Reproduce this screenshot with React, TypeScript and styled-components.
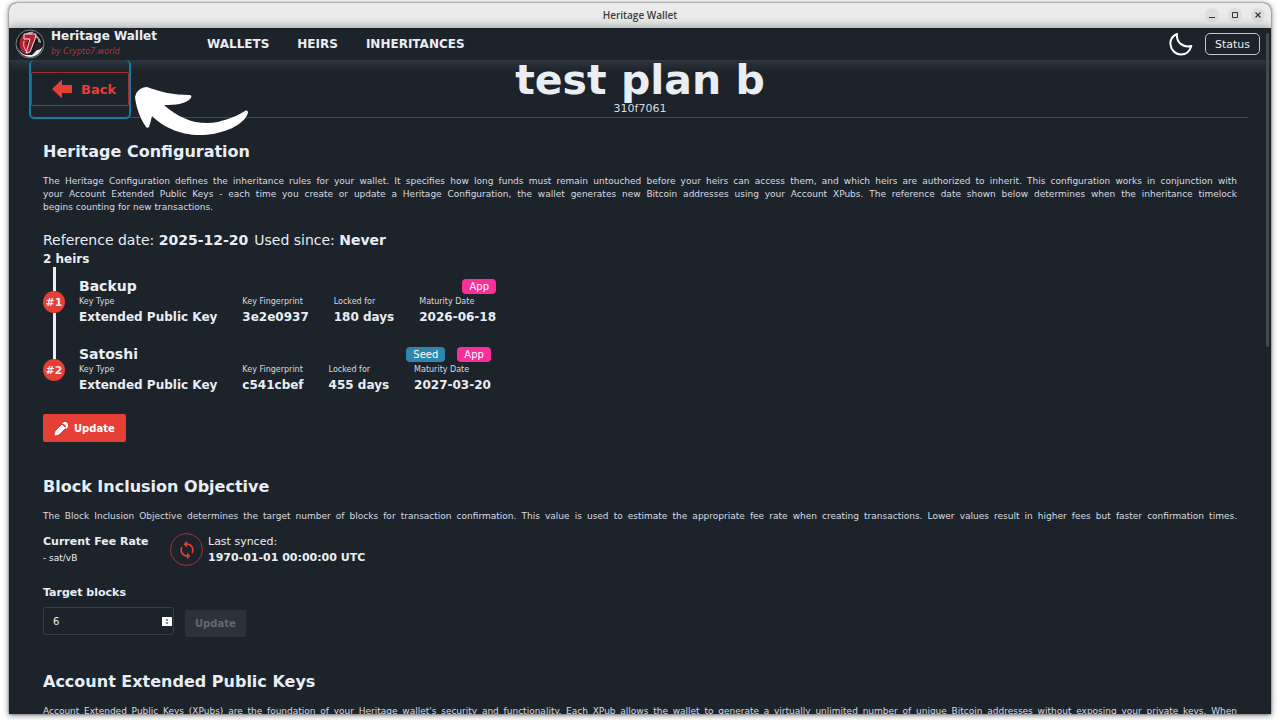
import React from "react";
import styled, { createGlobalStyle } from "styled-components";
import { MdSync } from "react-icons/md";

const red = "#e63f35";
const bg = "#1d232a";
const text = "#e9eef5";
const softText = "#d6dbe2";

const GlobalStyle = createGlobalStyle`
  * { box-sizing: border-box; }
  html, body, #root { height: 100%; }
  body {
    margin: 0;
    background: #ffffff;
    color: ${text};
    font-family: "DejaVu Sans", sans-serif;
    font-size: 12px;
    overflow: hidden;
  }
  h1, h2, h3, p, dl, dd, dt, ol { margin: 0; padding: 0; }
  button { font-family: inherit; cursor: pointer; }
  svg { flex-shrink: 0; }
`;

const Desktop = styled.div`
  height: 100vh;
  padding: 3px 9px 6px;
`;

const Window = styled.div`
  position: relative;
  display: flex;
  flex-direction: column;
  height: 100%;
  overflow: hidden;
  background: ${bg};
  border-radius: 8px 8px 0 0;
  box-shadow: 0 0 2px #555555, 0 1px 6px rgba(0, 0, 0, 0.55);
`;

const TitleBar = styled.div`
  display: grid;
  grid-template-columns: 1fr auto 1fr;
  align-items: center;
  flex: 0 0 25px;
  padding: 0 6px 2px;
  background: #ebebeb;
  color: #3d3d3d;
  font-family: "Open Sans", sans-serif;
  font-size: 10px;
  font-weight: 600;
`;

const WindowTitle = styled.span`
  grid-column: 2;
`;

const WindowControls = styled.div`
  display: flex;
  justify-content: flex-end;
  gap: 9px;
`;

const WindowButton = styled.button`
  display: grid;
  place-items: center;
  width: 14px;
  height: 14px;
  padding: 0;
  border: 0;
  border-radius: 50%;
  background: #dedede;
  color: #333333;
`;

const NavBar = styled.header`
  display: flex;
  align-items: center;
  flex: 0 0 32px;
  padding: 0 11px 0 6px;
  background: ${bg};
  box-shadow: 0 2px 10px 2px rgba(70, 78, 90, 0.6);
`;

const Brand = styled.a`
  display: flex;
  align-items: center;
  gap: 6px;
  width: 192px;
  color: ${text};
  text-decoration: none;
`;

const BrandName = styled.span`
  display: block;
  font-weight: 700;
  line-height: 15px;
`;

const BrandBy = styled.span`
  display: block;
  color: #b5343a;
  font-size: 8px;
  font-style: italic;
  line-height: 15px;
`;

const NavLinks = styled.nav`
  display: flex;
  flex: 1;
  gap: 28px;
`;

const NavLink = styled.a`
  color: ${text};
  font-weight: 700;
  text-decoration: none;
`;

const ThemeButton = styled.button`
  display: flex;
  margin-right: 12px;
  padding: 0;
  border: 0;
  background: none;
  color: #ffffff;
`;

const StatusButton = styled.button`
  height: 22px;
  padding: 0 9px;
  border: 1px solid #c3c8ce;
  border-radius: 5px;
  background: transparent;
  color: ${text};
  font-size: 11px;
`;

const Main = styled.main`
  flex: 1;
  min-height: 0;
  overflow: hidden;
`;

const PlanHeader = styled.div`
  display: grid;
  grid-template-columns: 1fr auto 1fr;
  align-items: start;
  height: 58px;
  margin: 0 23px;
  border-bottom: 1px solid #454b53;
`;

const BackFrame = styled.div`
  position: relative;
  justify-self: start;
  width: 102px;
  height: 59px;
  margin-left: -3px;
  padding-top: 12px;
  border: 2px solid #177aa3;
  border-top: 0;
  border-radius: 5px;
`;

const BackButton = styled.button`
  display: flex;
  align-items: center;
  gap: 8px;
  width: 100%;
  height: 34px;
  padding: 0 0 0 19px;
  border: 1px solid #a52c2b;
  border-radius: 2px;
  background: transparent;
  color: ${red};
  font-size: 13px;
  font-weight: 700;
`;

const Pointer = styled.svg`
  position: absolute;
  top: 26px;
  left: 103px;
`;

const PlanTitle = styled.div`
  text-align: center;
`;

const PlanName = styled.h1`
  font-size: 41px;
  font-weight: 700;
  line-height: 41px;
`;

const PlanId = styled.div`
  color: ${softText};
  font-size: 11px;
  line-height: 16px;
`;

const Content = styled.div`
  padding: 23px 34px 0;
`;

const Section = styled.section`
  margin-bottom: 34px;
`;

const SectionTitle = styled.h2`
  margin-bottom: 12px;
  font-size: 16px;
  font-weight: 700;
  line-height: 22px;
`;

const Paragraph = styled.p`
  color: ${softText};
  font-size: 9px;
  line-height: 13px;
`;

const Line = styled.span<{ $full?: boolean }>`
  display: block;
  white-space: nowrap;
  text-align: justify;
  text-align-last: ${(p) => (p.$full ? "justify" : "left")};
`;

const Dates = styled.div`
  display: flex;
  gap: 6px;
  margin-top: 15px;
  font-size: 14px;
  line-height: 22px;
`;

const HeirCount = styled.div`
  font-weight: 700;
  line-height: 16px;
`;

const HeirList = styled.ol`
  list-style: none;
`;

const Heir = styled.li`
  display: flex;
  gap: 14px;
  height: 68px;
`;

const Rail = styled.div<{ $last: boolean }>`
  display: flex;
  flex-direction: column;
  align-items: center;
  width: 22px;
  &::before {
    content: "";
    width: 3px;
    height: 24px;
    background: ${text};
  }
  &::after {
    content: "";
    width: 3px;
    flex: 1;
    background: ${(p) => (p.$last ? "transparent" : text)};
  }
`;

const Rank = styled.span`
  display: grid;
  place-items: center;
  width: 22px;
  height: 22px;
  border-radius: 50%;
  background: ${red};
  font-size: 11px;
  font-weight: 700;
`;

const HeirBody = styled.div`
  padding-top: 9px;
`;

const HeirTop = styled.div`
  display: flex;
  align-items: center;
  justify-content: space-between;
`;

const HeirName = styled.h3`
  font-size: 14px;
  font-weight: 700;
  line-height: 20px;
`;

const Badges = styled.div`
  display: flex;
  gap: 12px;
`;

const Badge = styled.span<{ $color: string }>`
  height: 15px;
  padding: 0 7px;
  border-radius: 4px;
  background: ${(p) => p.$color};
  color: #ffffff;
  font-size: 10px;
  line-height: 15px;
`;

const Facts = styled.dl`
  display: flex;
  gap: 25px;
`;

const FactLabel = styled.dt`
  color: ${softText};
  font-size: 8px;
  line-height: 12px;
`;

const FactValue = styled.dd`
  font-weight: 700;
  line-height: 19px;
`;

const UpdateButton = styled.button`
  display: flex;
  align-items: center;
  justify-content: center;
  gap: 5px;
  height: 28px;
  padding: 0 11px;
  border: 0;
  border-radius: 2px;
  background: ${red};
  color: #ffffff;
  font-size: 10px;
  font-weight: 700;
  &:disabled {
    height: 27px;
    padding: 0 10px;
    background: #2c323a;
    color: #636870;
  }
`;

const HeirActions = styled.div`
  margin-top: 11px;
`;

const FeeRow = styled.div`
  display: flex;
  align-items: center;
  margin-top: 10px;
  font-size: 11px;
  line-height: 16px;
`;

const FeeRate = styled.div`
  width: 127px;
`;

const Small = styled.div`
  font-size: 9px;
`;

const SyncButton = styled.button`
  display: grid;
  place-items: center;
  width: 33px;
  height: 33px;
  margin-right: 5px;
  padding: 0;
  border: 1px solid #a8303a;
  border-radius: 50%;
  background: transparent;
  color: ${red};
`;

const TargetLabel = styled.label`
  display: block;
  margin-top: 19px;
  font-size: 11px;
  font-weight: 700;
  line-height: 16px;
`;

const TargetRow = styled.div`
  display: flex;
  align-items: flex-end;
  gap: 11px;
  margin-top: 6px;
`;

const Field = styled.div`
  display: flex;
  align-items: center;
  width: 131px;
  height: 28px;
  margin-bottom: 2px;
  padding: 0 1px 0 9px;
  border: 1px solid #383e46;
  border-radius: 3px;
`;

const NumberInput = styled.input`
  flex: 1;
  min-width: 0;
  padding: 0;
  border: 0;
  outline: 0;
  background: transparent;
  color: ${text};
  font-family: inherit;
  font-size: 10px;
  appearance: textfield;
  &::-webkit-inner-spin-button { appearance: none; }
`;

const ScrollThumb = styled.div`
  position: absolute;
  top: 30px;
  right: 2px;
  width: 3px;
  height: 314px;
  border-radius: 2px;
  background: #444950;
`;

type HeirData = {
  name: string;
  badges: string[];
  fingerprint: string;
  locked: string;
  maturity: string;
};

const heirs: HeirData[] = [
  { name: "Backup", badges: ["App"], fingerprint: "3e2e0937", locked: "180 days", maturity: "2026-06-18" },
  { name: "Satoshi", badges: ["Seed", "App"], fingerprint: "c541cbef", locked: "455 days", maturity: "2027-03-20" },
];

const badgeColors: Record<string, string> = { App: "#fb2f99", Seed: "#2f86ad" };

const Logo = () => (
  <svg width="30" height="30" viewBox="0 0 30 30" aria-hidden="true">
    <circle cx="15" cy="15" r="14" fill="#15181d" stroke="#7d7f83" strokeWidth="1" />
    <path d="M2 17c2 7 7 11 13 11s11-4 13-11c-2 3-4 4-6 4l-5 5h-6c-4-1-7-4-9-9z" fill="#eceaea" />
    <path d="M7 8c3-4 8-6 12-5l-3 2c-4 0-6 2-7 5zM21 6c3 2 5 5 5 8l-3-1c1-2-1-5-4-5z" fill="#a9a4a6" />
    <path d="M9 5c-5 4-6 12-2 18l5 3 3-3c-4-4-4-9-1-13l-3-1z" fill="#b51f32" />
    <path d="M9 5h12l-1 5-5 13-4 1 4-14H9z" fill="#b51f32" stroke="#eee4e5" strokeWidth="1" />
    <path d="M9 12c-1 4 0 7 2 10" fill="none" stroke="#e2b9be" strokeWidth="1" />
    <path d="M20 15l5-1 1 3-4 4-3-1z" fill="#2a2226" />
  </svg>
);

const Fact = ({ label, value }: { label: string; value: string }) => (
  <div>
    <FactLabel>{label}</FactLabel>
    <FactValue>{value}</FactValue>
  </div>
);

export default function App() {
  return (
    <Desktop>
      <GlobalStyle />
      <Window>
        <TitleBar>
          <WindowTitle>Heritage Wallet</WindowTitle>
          <WindowControls>
            <WindowButton aria-label="Minimize">
              <svg width="8" height="8" viewBox="0 0 8 8"><path d="M1 6.500h6" stroke="currentColor" /></svg>
            </WindowButton>
            <WindowButton aria-label="Maximize">
              <svg width="8" height="8" viewBox="0 0 8 8"><path d="M1.500 1.500h5v5h-5z" fill="none" stroke="currentColor" /></svg>
            </WindowButton>
            <WindowButton aria-label="Close">
              <svg width="8" height="8" viewBox="0 0 8 8"><path d="M1.500 1.500l5 5m0-5l-5 5" stroke="currentColor" strokeWidth="1.200" /></svg>
            </WindowButton>
          </WindowControls>
        </TitleBar>
        <NavBar>
          <Brand href="#">
            <Logo />
            <span>
              <BrandName>Heritage Wallet</BrandName>
              <BrandBy>by Crypto7.world</BrandBy>
            </span>
          </Brand>
          <NavLinks>
            <NavLink href="#wallets">WALLETS</NavLink>
            <NavLink href="#heirs">HEIRS</NavLink>
            <NavLink href="#inheritances">INHERITANCES</NavLink>
          </NavLinks>
          <ThemeButton aria-label="Dark theme">
            <svg width="24" height="24" viewBox="0 0 24 24">
              <path
                d="M8 2C3.500 4 1 8 1.500 12.500 2 18 6.500 22.500 12 22.500c5 0 9-3.500 10.300-8.500C15 16 7 11 8 2z"
                fill="none"
                stroke="currentColor"
                strokeWidth="2"
                strokeLinejoin="round"
              />
            </svg>
          </ThemeButton>
          <StatusButton>Status</StatusButton>
        </NavBar>
        <Main>
          <PlanHeader>
            <BackFrame>
              <BackButton>
                <svg width="22" height="20" viewBox="0 0 22 20" aria-hidden="true">
                  <path d="M1 10L11 0.500V6H21v8H11v5.500z" fill="currentColor" />
                </svg>
                Back
              </BackButton>
              <Pointer width="116" height="50" viewBox="0 0 116 50" aria-hidden="true">
                <path
                  d="M2 8C4 4 8 1 13 1c13 5 27 8 42 8 3 0 3 2 1 4-5 5-14 6-26 6 15 14 35 21 54 17 11-3 19-6 27-11 2-1 3 0 3 2-4 12-24 21-45 22-23 1-41-9-51-19-1 4-2 8-3 11-1 1-2 1-3 0C6 32 2 21 1 11z"
                  fill="#ffffff"
                />
              </Pointer>
            </BackFrame>
            <PlanTitle>
              <PlanName>test plan b</PlanName>
              <PlanId>310f7061</PlanId>
            </PlanTitle>
          </PlanHeader>
          <Content>
            <Section>
              <SectionTitle>Heritage Configuration</SectionTitle>
              <Paragraph>
                <Line $full>
                  The Heritage Configuration defines the inheritance rules for your wallet. It specifies how long funds must remain untouched before your heirs can access them, and which heirs are authorized to inherit. This configuration works in conjunction with
                </Line>
                <Line $full>
                  your Account Extended Public Keys - each time you create or update a Heritage Configuration, the wallet generates new Bitcoin addresses using your Account XPubs. The reference date shown below determines when the inheritance timelock
                </Line>
                <Line>begins counting for new transactions.</Line>
              </Paragraph>
              <Dates>
                <span>Reference date: <b>2025-12-20</b></span>
                <span>Used since: <b>Never</b></span>
              </Dates>
              <HeirCount>2 heirs</HeirCount>
              <HeirList>
                {heirs.map((heir, i) => (
                  <Heir key={heir.name}>
                    <Rail $last={i === heirs.length - 1}>
                      <Rank>#{i + 1}</Rank>
                    </Rail>
                    <HeirBody>
                      <HeirTop>
                        <HeirName>{heir.name}</HeirName>
                        <Badges>
                          {heir.badges.map((b) => (
                            <Badge key={b} $color={badgeColors[b]}>{b}</Badge>
                          ))}
                        </Badges>
                      </HeirTop>
                      <Facts>
                        <Fact label="Key Type" value="Extended Public Key" />
                        <Fact label="Key Fingerprint" value={heir.fingerprint} />
                        <Fact label="Locked for" value={heir.locked} />
                        <Fact label="Maturity Date" value={heir.maturity} />
                      </Facts>
                    </HeirBody>
                  </Heir>
                ))}
              </HeirList>
              <HeirActions>
                <UpdateButton>
                  <svg width="15" height="15" viewBox="0 0 15 15" aria-hidden="true">
                    <path d="M1 14l1-4 6-6 3 3-6 6z" fill="currentColor" stroke="currentColor" strokeLinejoin="round" />
                    <path d="M8 3l2-2h2l2 2v3l-2 2-1-1 1-2-2-2z" fill="currentColor" />
                  </svg>
                  Update
                </UpdateButton>
              </HeirActions>
            </Section>
            <Section>
              <SectionTitle>Block Inclusion Objective</SectionTitle>
              <Paragraph>
                <Line $full>
                  The Block Inclusion Objective determines the target number of blocks for transaction confirmation. This value is used to estimate the appropriate fee rate when creating transactions. Lower values result in higher fees but faster confirmation times.
                </Line>
              </Paragraph>
              <FeeRow>
                <FeeRate>
                  <b>Current Fee Rate</b>
                  <Small>- sat/vB</Small>
                </FeeRate>
                <SyncButton aria-label="Sync fee rate">
                  <MdSync size={20} />
                </SyncButton>
                <div>
                  <div>Last synced:</div>
                  <b>1970-01-01 00:00:00 UTC</b>
                </div>
              </FeeRow>
              <TargetLabel htmlFor="target-blocks">Target blocks</TargetLabel>
              <TargetRow>
                <Field>
                  <NumberInput id="target-blocks" type="number" defaultValue={6} />
                  <svg width="10" height="9" viewBox="0 0 10 9" aria-hidden="true">
                    <path d="M0 0h10v9H0z" fill="#ffffff" />
                    <path d="M3.500 3.500L5 2l1.500 1.500zM3.500 5.500L5 7l1.500-1.500z" fill="#222222" />
                  </svg>
                </Field>
                <UpdateButton disabled>Update</UpdateButton>
              </TargetRow>
            </Section>
            <Section>
              <SectionTitle>Account Extended Public Keys</SectionTitle>
              <Paragraph>
                <Line $full>
                  Account Extended Public Keys (XPubs) are the foundation of your Heritage wallet's security and functionality. Each XPub allows the wallet to generate a virtually unlimited number of unique Bitcoin addresses without exposing your private keys. When
                </Line>
              </Paragraph>
            </Section>
          </Content>
        </Main>
        <ScrollThumb />
      </Window>
    </Desktop>
  );
}
